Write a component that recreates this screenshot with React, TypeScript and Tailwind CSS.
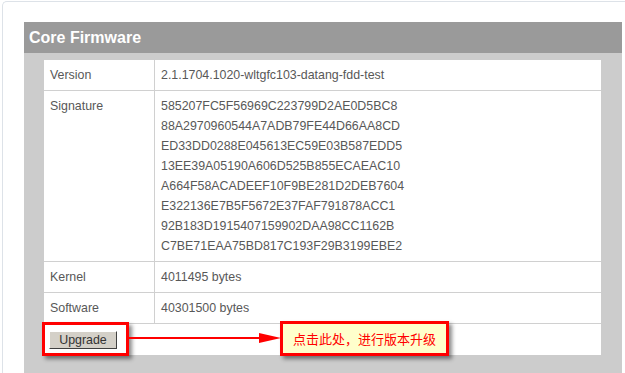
const labelFont = { fontFamily: '"Liberation Sans", Arial, sans-serif' };

const signature = [
  "585207FC5F56969C223799D2AE0D5BC8",
  "88A2970960544A7ADB79FE44D66AA8CD",
  "ED33DD0288E045613EC59E03B587EDD5",
  "13EE39A05190A606D525B855ECAEAC10",
  "A664F58ACADEEF10F9BE281D2DEB7604",
  "E322136E7B5F5672E37FAF791878ACC1",
  "92B183D1915407159902DAA98CC1162B",
  "C7BE71EAA75BD817C193F29B3199EBE2",
];

const rows: { label: string; value: string[] }[] = [
  { label: "Version", value: ["2.1.1704.1020-wltgfc103-datang-fdd-test"] },
  { label: "Signature", value: signature },
  { label: "Kernel", value: ["4011495 bytes"] },
  { label: "Software", value: ["40301500 bytes"] },
];

const App = () => {
  return (
    <div className="w-[625px] h-[373px] overflow-hidden bg-white pt-[1px] pl-[2px]" style={labelFont}>
      <div className="h-full border-l border-t border-[#dde2e8] rounded-tl-[5px] bg-white pt-[20px] pl-[21px]">
        {/* Panel */}
        <div className="w-[598px]">
          <div className="h-[31px] bg-[#9a9a9a] pl-[5px] flex items-center text-white font-bold text-[16px]">
            Core Firmware
          </div>
          <div className="bg-[#cccccc] pt-[7px] pl-[20px] h-[400px]">
            <div className="w-[557px] bg-white text-[12.4px] text-[#585858]">
              {rows.map((r) => (
                <div key={r.label} className="flex border-b border-[#d0d0d0]">
                  <div className="w-[111px] border-r border-[#d0d0d0] px-[6px] py-[5px] leading-[20px]">
                    {r.label}
                  </div>
                  <div className="flex-1 px-[6px] py-[5px] leading-[20px]">
                    {r.value.map((v) => (
                      <div key={v}>{v}</div>
                    ))}
                  </div>
                </div>
              ))}

              {/* Upgrade row */}
              <div className="relative h-[31px] pl-[5px] pt-[7px]">
                <button className="w-[68px] h-[18px] bg-[#d4d0c8] border border-t-white border-l-white border-b-[#404040] border-r-[#404040] text-[12.4px] text-[#333333] leading-[14px]">
                  Upgrade
                </button>

                {/* annotation: box around button */}
                <div className="absolute left-[-2px] top-[-2px] w-[87px] h-[34px] border-[3px] border-[#ff0000] shadow-[3px_3px_4px_rgba(0,0,0,0.45)] pointer-events-none" />

                {/* annotation: arrow */}
                <svg className="absolute left-[85px] top-[7px]" width="152" height="14" viewBox="0 0 152 14">
                  <line x1="0" y1="7" x2="136" y2="7" stroke="#ff0000" strokeWidth="2" />
                  <polygon points="130,2 152,7 130,12" fill="#ff0000" />
                </svg>

                {/* annotation: callout */}
                <div
                  className="absolute left-[236px] top-[-3px] w-[169px] h-[35px] border-[3px] border-[#ff0000] bg-[#ffffcc] shadow-[3px_3px_4px_rgba(0,0,0,0.45)] flex items-center pl-[10px] text-[13px] text-[#ff0000]"
                  style={{ fontFamily: '"Noto Sans CJK SC", "Liberation Sans", sans-serif' }}
                >
                  点击此处，进行版本升级
                </div>
              </div>
            </div>
          </div>
        </div>
      </div>
    </div>
  );
};

export default App;
